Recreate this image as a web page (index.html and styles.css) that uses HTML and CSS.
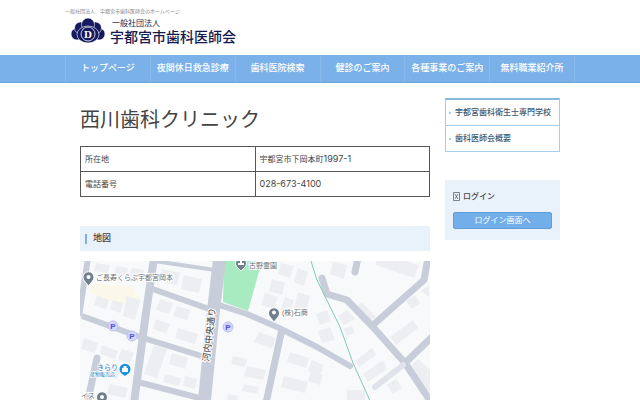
FILE: index.html
```
<!DOCTYPE html>
<html lang="ja">
<head>
<meta charset="utf-8">
<meta name="viewport" content="width=device-width, initial-scale=1">
<title>西川歯科クリニック</title>
<link rel="stylesheet" href="styles.css">
</head>
<body>
<header class="site-header wrap">
  <p class="tagline">一般社団法人　宇都宮市歯科医師会のホームページ</p>
  <a class="brand" href="#">
    <svg class="brand-mark" viewBox="0 0 36 28" aria-hidden="true">
      <g fill="#161a5e" stroke="#fff" stroke-width=".6">
        <circle cx="7" cy="17" r="6"/>
        <circle cx="29" cy="17" r="6"/>
        <circle cx="10.500" cy="11" r="6"/>
        <circle cx="25.500" cy="11" r="6"/>
        <circle cx="18" cy="7.500" r="6.500"/>
        <ellipse cx="18" cy="17.500" rx="11" ry="8.500"/>
      </g>
      <circle cx="18" cy="17" r="7" fill="#161a5e" stroke="#fff" stroke-width=".8"/>
      <text x="18" y="21" class="mark-letter">D</text>
    </svg>
    <span class="brand-name"><small>一般社団法人</small><strong>宇都宮市歯科医師会</strong></span>
  </a>
</header>
<nav class="nav">
  <ul class="nav-list wrap">
    <li><a href="#">トップページ</a></li>
    <li><a href="#">夜間休日救急診療所</a></li>
    <li><a href="#">歯科医院検索</a></li>
    <li><a href="#">健診のご案内</a></li>
    <li><a href="#">各種事業のご案内</a></li>
    <li><a href="#">無料職業紹介所</a></li>
  </ul>
</nav>
<div class="columns wrap">
  <main class="main">
    <h1>西川歯科クリニック</h1>
    <table class="info">
      <tr><th scope="row">所在地</th><td>宇都宮市下岡本町<span class="num">1997-1</span></td></tr>
      <tr><th scope="row">電話番号</th><td><span class="num">028-673-4100</span></td></tr>
    </table>
    <h2>地図</h2>
    <svg class="map" viewBox="80 261 350 139" role="img" aria-label="地図">
      <rect x="80" y="261" width="350" height="139" fill="#f8f9fb"/>
      <path d="M92 283l40 4 8 14-18 4-32-12z" fill="#fbf8ea"/>
      <g fill="#eceef1">
        <path d="M96 263l14 2-2 8-14-2zM116 266l12 2-2 9-12-3zM132 268l12 2-3 12-12-4zM97 296l12 4-3 9-12-4zM113 300l10 3-3 10-10-4zM127 296l13 4-5 20-12-4zM84 338l14 5-3 10-14-4zM102 345l16 6-3 8-15-5zM122 349l12 4-4 10-12-4zM108 366l12 4-3 9-12-4zM110 384l18 4-3 10-18-4z"/>
        <path d="M162 269l18 4-3 12-18-4zM184 275l18 4-3 14-18-4zM160 299l13 4-4 11-13-4zM177 306l14 4-4 10-14-4zM156 319l14 5-4 9-13-4zM178 328l20 6-3 10-20-6zM154 345l13 4-10 29-13-4zM172 353l16 5-3 11-16-5zM165 374l16 4-2 8-16-4zM185 376l12 3-2 10-12-3z"/>
        <path d="M281 263l13 3-4 12-12-4zM298 268l10 4-4 14-10-4zM272 279l13 4-3 12-13-4zM265 293l13 4-4 12-13-4zM285 297l9 3-4 13-9-3zM298 292l12 4-4 16-12-4zM259 332l17 6-4 10-18-6zM233 356l14 3-2 8-14-3zM247 366l19 4-3 10-19-4zM244 384l15 3-2 7-15-3zM228 394l10 2-1 6h-10zM290 352l19 6-3 10-19-6zM284 376l24 6-3 11-24-6zM311 371l12 4-3 10-12-4z"/>
        <path d="M333 262l14 3-3 14-14-5zM376 261h30l13 4-5 13-38-13zM316 314l11-4 4 11-11 4zM318 331l12-4 5 13-13 3zM338 316l9-6 8 9-11 6zM343 329l9-3 3 7-8 3zM355 307l7-5 14 15-8 5zM406 301l9-6 5 8-8 6zM421 291l8-6v12zM390 337l23-17 5 8-22 17zM355 361l17-13 4 7-17 12zM363 374l20-14 4 9-19 13zM387 385l9-6 6 9-9 6zM406 371l12-12 12 11v22zM312 360l12 5-4 10-12-4zM347 390h18v10h-18z"/>
      </g>
      <path d="M224 261h39l-5 14-10 36-25-9z" fill="#a8ebc1"/>
      <g fill="none" stroke="#c8ced9" stroke-width="7" stroke-linejoin="round">
        <path d="M88 258l-9 58M82 316l58 21 55 17 12 4M147 287l65 23M138 382l65 17" stroke-width="6"/>
        <path d="M154 261l61 9" stroke-width="4"/>
        <path d="M97 358l-9 42" stroke-width="7" stroke-linecap="round"/>
        <path d="M154 258l-9 62-11 83" stroke-width="8"/>
        <path d="M219 305l28 9 30 13 40 20 33 19" stroke-width="6" stroke-linecap="round"/>
        <path d="M282 329l-16 74"/>
        <path d="M322 278l5 16 20 6 26 27 32 36 28 42M373 325l51-45 4-22M405 363l28-27M358 258l-3 14" stroke-linecap="round"/>
        <path d="M375 387l28-22" stroke="#e0e4ea" stroke-width="6" stroke-linecap="round"/>
        <path d="M220 255l-7 60-9 90" stroke-width="13"/>
      </g>
      <path d="M310 258l7 22 23 47 13 36 18 40" fill="none" stroke="#84c9b2"/>
      <g fill="#6f7f8c" stroke="#fff">
        <path d="M88.500 286l-4-5a5.500 5.500 0 1 1 8 0zM274 322l-4-5a5.500 5.500 0 1 1 8 0zM241 271l-4-4a5.500 5.500 0 1 1 8 0zM102 406l-4-5a5.500 5.500 0 1 1 8 0z"/>
      </g>
      <g fill="#fff"><circle cx="88.500" cy="277" r="2"/><circle cx="274" cy="312.500" r="2"/><circle cx="102" cy="397" r="2"/><path d="M240 259h2v4h2v2h-6v-2h2z"/></g>
      <g fill="#d5d8ff" stroke="#bcc0f5"><circle cx="113" cy="326" r="5"/><circle cx="132" cy="336" r="5"/><circle cx="228" cy="327" r="5"/></g>
      <g class="parking"><text x="113" y="329">P</text><text x="132" y="339">P</text><text x="228" y="330">P</text></g>
      <path d="M125 376l-4-3a5.500 5.500 0 1 1 8 0z" fill="#1793dc"/>
      <path d="M122 368h6v4h-6zM123.500 368v-2h3v2" fill="#fff"/>
      <g class="place">
        <text x="96" y="280">ご長寿くらぶ宇都宮岡本</text>
        <text x="249" y="268">古野霊園</text>
        <text x="282" y="315">(株)石商</text>
        <text x="81" y="398">イス</text>
      </g>
      <g class="shop"><text x="97" y="370">きらり</text><text x="90" y="376" class="shop-note">産物販売店</text></g>
      <text class="road-name" transform="translate(209 362) rotate(-83)">河内中央通り</text>
    </svg>
  </main>
  <aside class="side">
    <ul class="side-menu">
      <li><a href="#">宇都宮歯科衛生士専門学校</a></li>
      <li><a href="#">歯科医師会概要</a></li>
    </ul>
    <section class="login">
      <h3><svg class="missing" viewBox="0 0 7 9" aria-hidden="true"><path d="M.5.500h6v8h-6zM2 2l3 5M5 2L2 7" fill="none" stroke="#555" stroke-width=".7"/></svg>ログイン</h3>
      <button type="button">ログイン画面へ</button>
    </section>
  </aside>
</div>
</body>
</html>
```
FILE: styles.css
```
* { box-sizing: border-box; }
body {
  margin: 0;
  background: #fff;
  color: #444;
  font: 9px/15px "Liberation Sans", "Noto Sans CJK JP", sans-serif;
  overflow-x: hidden;
}
ul { list-style: none; margin: 0; padding: 0; }
a { color: inherit; text-decoration: none; }
.wrap { max-width: 510px; margin: 0 auto; }
.site-header { height: 55px; padding-top: 7px; }
.tagline { margin: 0; font-size: 5px; line-height: 8px; color: #888; }
.brand { display: flex; gap: 4px; padding-left: 5px; color: #161a4e; }
.brand-mark { width: 36px; height: 28px; margin-top: 2px; }
.mark-letter { font: bold 11px "Liberation Serif", serif; fill: #fff; text-anchor: middle; }
.brand-name { display: flex; flex-direction: column; padding-top: 4px; }
.brand-name small { font-size: 8px; line-height: 10px; padding-left: 2px; }
.brand-name strong { font-size: 14px; line-height: 16px; font-weight: 500; }
.nav { background: #7ab1e8; border-bottom: 1px solid #6ba6d8; }
.nav-list {
  display: grid;
  grid-template-columns: repeat(6, minmax(0, 1fr));
  border-left: 1px solid #87b9ea;
}
.nav-list li { padding: 0 6px; border-right: 1px solid #87b9ea; }
.nav-list a {
  display: block;
  overflow: hidden;
  color: #fff;
  font-weight: 500;
  line-height: 27px;
  text-align: center;
  white-space: nowrap;
}
.columns { display: flex; gap: 15px; padding: 15px 15px 0; }
.main { flex: 1; min-width: 0; }
h1 { margin: 7px 0 11px; font-size: 20px; line-height: 30px; font-weight: 400; }
.info { width: 100%; border-collapse: collapse; table-layout: fixed; font-size: 8px; }
.info th, .info td {
  height: 25px;
  padding: 0 4px;
  border: 1px solid #555;
  font-weight: 400;
  text-align: left;
}
.num { font-family: Inter, sans-serif; font-size: 9px; }
h2 {
  display: flex;
  align-items: center;
  gap: 6px;
  height: 25px;
  margin: 29px 0 10px;
  padding-left: 5px;
  background: #e9f1fa;
  font-size: 9px;
  font-weight: 500;
}
h2::before { content: ""; width: 2px; height: 10px; background: #7ab1e0; }
.map { display: block; width: 100%; }
.place { font-size: 7px; fill: #65717c; stroke: #fff; stroke-width: 2px; paint-order: stroke; }
.parking { font-size: 8px; font-weight: bold; fill: #4a50dc; text-anchor: middle; }
.shop { font-size: 7px; fill: #1c80c4; stroke: #fff; stroke-width: 1px; paint-order: stroke; }
.shop-note { font-size: 5px; }
.road-name { font-size: 9px; font-weight: 500; fill: #555d68; stroke: #fff; stroke-width: 2px; paint-order: stroke; }
.side { width: 115px; }
.side-menu { border: 1px solid #a5cdec; border-top: 2px solid #87b9dc; }
.side-menu li + li { border-top: 1px solid #a5cdec; }
.side-menu a {
  display: flex;
  gap: 4px;
  padding: 5px 3px;
  color: #3f5870;
  font-size: 8px;
  font-weight: 500;
  line-height: 15px;
  white-space: nowrap;
}
.side-menu a::before { content: ""; width: 2px; height: 2px; margin-top: 7px; background: #a5cdec; }
.login { margin-top: 28px; padding: 9px 8px 11px; background: #e9f1fa; }
.login h3 { display: flex; align-items: center; gap: 3px; margin: 0 0 8px; font-size: 8px; font-weight: 500; }
.missing { width: 7px; height: 9px; }
.login button {
  display: block;
  width: 100%;
  height: 17px;
  padding: 0;
  border: 1px solid #609ed8;
  border-radius: 2px;
  background: #71aeea;
  color: #fff;
  font: inherit;
  font-size: 8px;
}
```
